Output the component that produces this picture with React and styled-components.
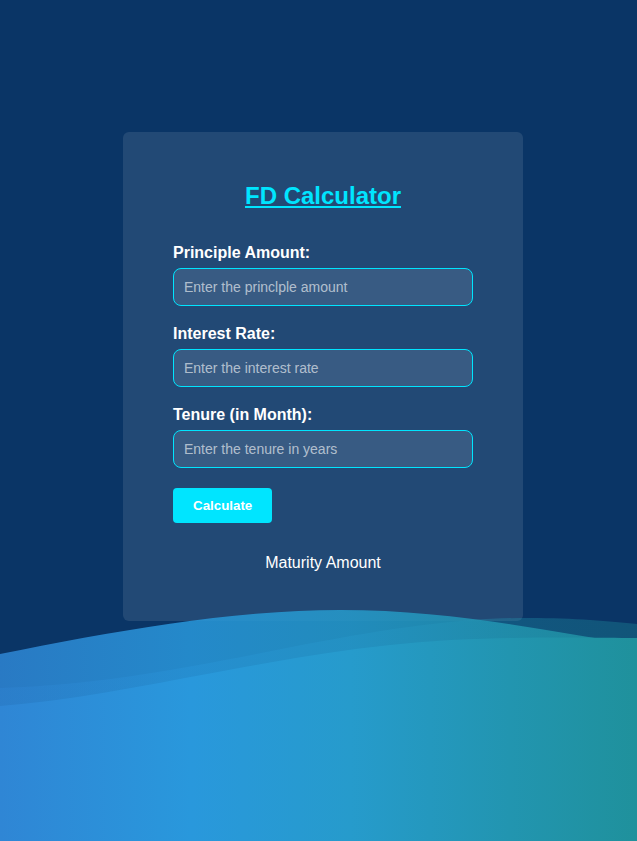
import React from "react";
import styled, { createGlobalStyle } from "styled-components";

const GlobalStyle = createGlobalStyle`
  html, body {
    margin: 0;
    padding: 0;
    background: #0a3566;
    font-family: "Liberation Sans", Arial, sans-serif;
    overflow: hidden;
  }
  * { box-sizing: border-box; }
`;

const Page = styled.div`
  min-height: 100vh;
  display: flex;
  justify-content: center;
  align-items: flex-start;
  padding: 132px 0 0 9px;
`;

const Card = styled.div`
  width: 400px;
  padding: 50px 50px 49px;
  background: rgba(255, 255, 255, 0.1);
  border-radius: 6px;
  display: flex;
  flex-direction: column;
`;

const Title = styled.h2`
  margin: 0 0 34px;
  font-size: 24px;
  line-height: normal;
  font-weight: 700;
  color: #00e5ff;
  text-align: center;
  text-decoration: underline;
`;

const Field = styled.div`
  display: flex;
  flex-direction: column;
  gap: 6px;
  margin-bottom: ${(p) => (p.$last ? "20px" : "19px")};
`;

const Label = styled.label`
  font-size: 16px;
  line-height: normal;
  font-weight: 700;
  color: #ffffff;
`;

const Input = styled.input`
  width: 300px;
  height: 38px;
  padding: 0 10px;
  border: 1px solid #00e5ff;
  border-radius: 8px;
  background: rgba(255, 255, 255, 0.1);
  color: #ffffff;
  font-family: "Liberation Sans", Arial, sans-serif;
  font-size: 14px;
  outline: none;
  &::placeholder {
    color: rgba(255, 255, 255, 0.62);
  }
`;

const Button = styled.button`
  align-self: flex-start;
  padding: 10px 20px;
  border: none;
  border-radius: 4px;
  background: #00e5ff;
  color: #ffffff;
  font-family: "Liberation Sans", Arial, sans-serif;
  font-size: 13.33px;
  line-height: 15px;
  font-weight: 700;
  cursor: pointer;
`;

const Result = styled.div`
  margin-top: 31px;
  font-size: 16px;
  line-height: normal;
  color: #ffffff;
  text-align: center;
`;

const Waves = styled.svg`
  position: fixed;
  left: 0;
  bottom: 0;
  width: 100%;
  height: 231px;
  pointer-events: none;
  display: block;
`;

const fields = [
  { label: "Principle Amount:", placeholder: "Enter the princlple amount" },
  { label: "Interest Rate:", placeholder: "Enter the interest rate" },
  { label: "Tenure (in Month):", placeholder: "Enter the tenure in years" },
];

export default function App() {
  return (
    <>
      <GlobalStyle />
      <Page>
        <Card>
          <Title>FD Calculator</Title>
          {fields.map((f, i) => (
            <Field key={f.label} $last={i === fields.length - 1}>
              <Label>{f.label}</Label>
              <Input type="text" placeholder={f.placeholder} />
            </Field>
          ))}
          <Button>Calculate</Button>
          <Result>Maturity Amount</Result>
        </Card>
      </Page>
      <Waves viewBox="0 0 637 231" preserveAspectRatio="none">
        <defs>
          <linearGradient id="waveGrad" gradientUnits="userSpaceOnUse" x1="0" y1="0" x2="637" y2="0">
            <stop offset="0" stopColor="#2f86d5" />
            <stop offset="0.3" stopColor="#2998dc" />
            <stop offset="0.55" stopColor="#269bcc" />
            <stop offset="0.8" stopColor="#2295b0" />
            <stop offset="1" stopColor="#1f919c" />
          </linearGradient>
        </defs>
        <path
          d="M0,44 C110,22 230,0 340,0 C450,0 540,20 637,35 L637,231 L0,231 Z"
          fill="url(#waveGrad)"
          opacity="0.85"
        />
        <path
          d="M0,78 C180,72 300,25 470,10 C540,5 600,10 637,14 L637,231 L0,231 Z"
          fill="url(#waveGrad)"
          opacity="0.35"
        />
        <path
          d="M0,96 C140,85 280,40 450,30 C540,26 600,28 637,28 L637,231 L0,231 Z"
          fill="url(#waveGrad)"
        />
      </Waves>
    </>
  );
}
